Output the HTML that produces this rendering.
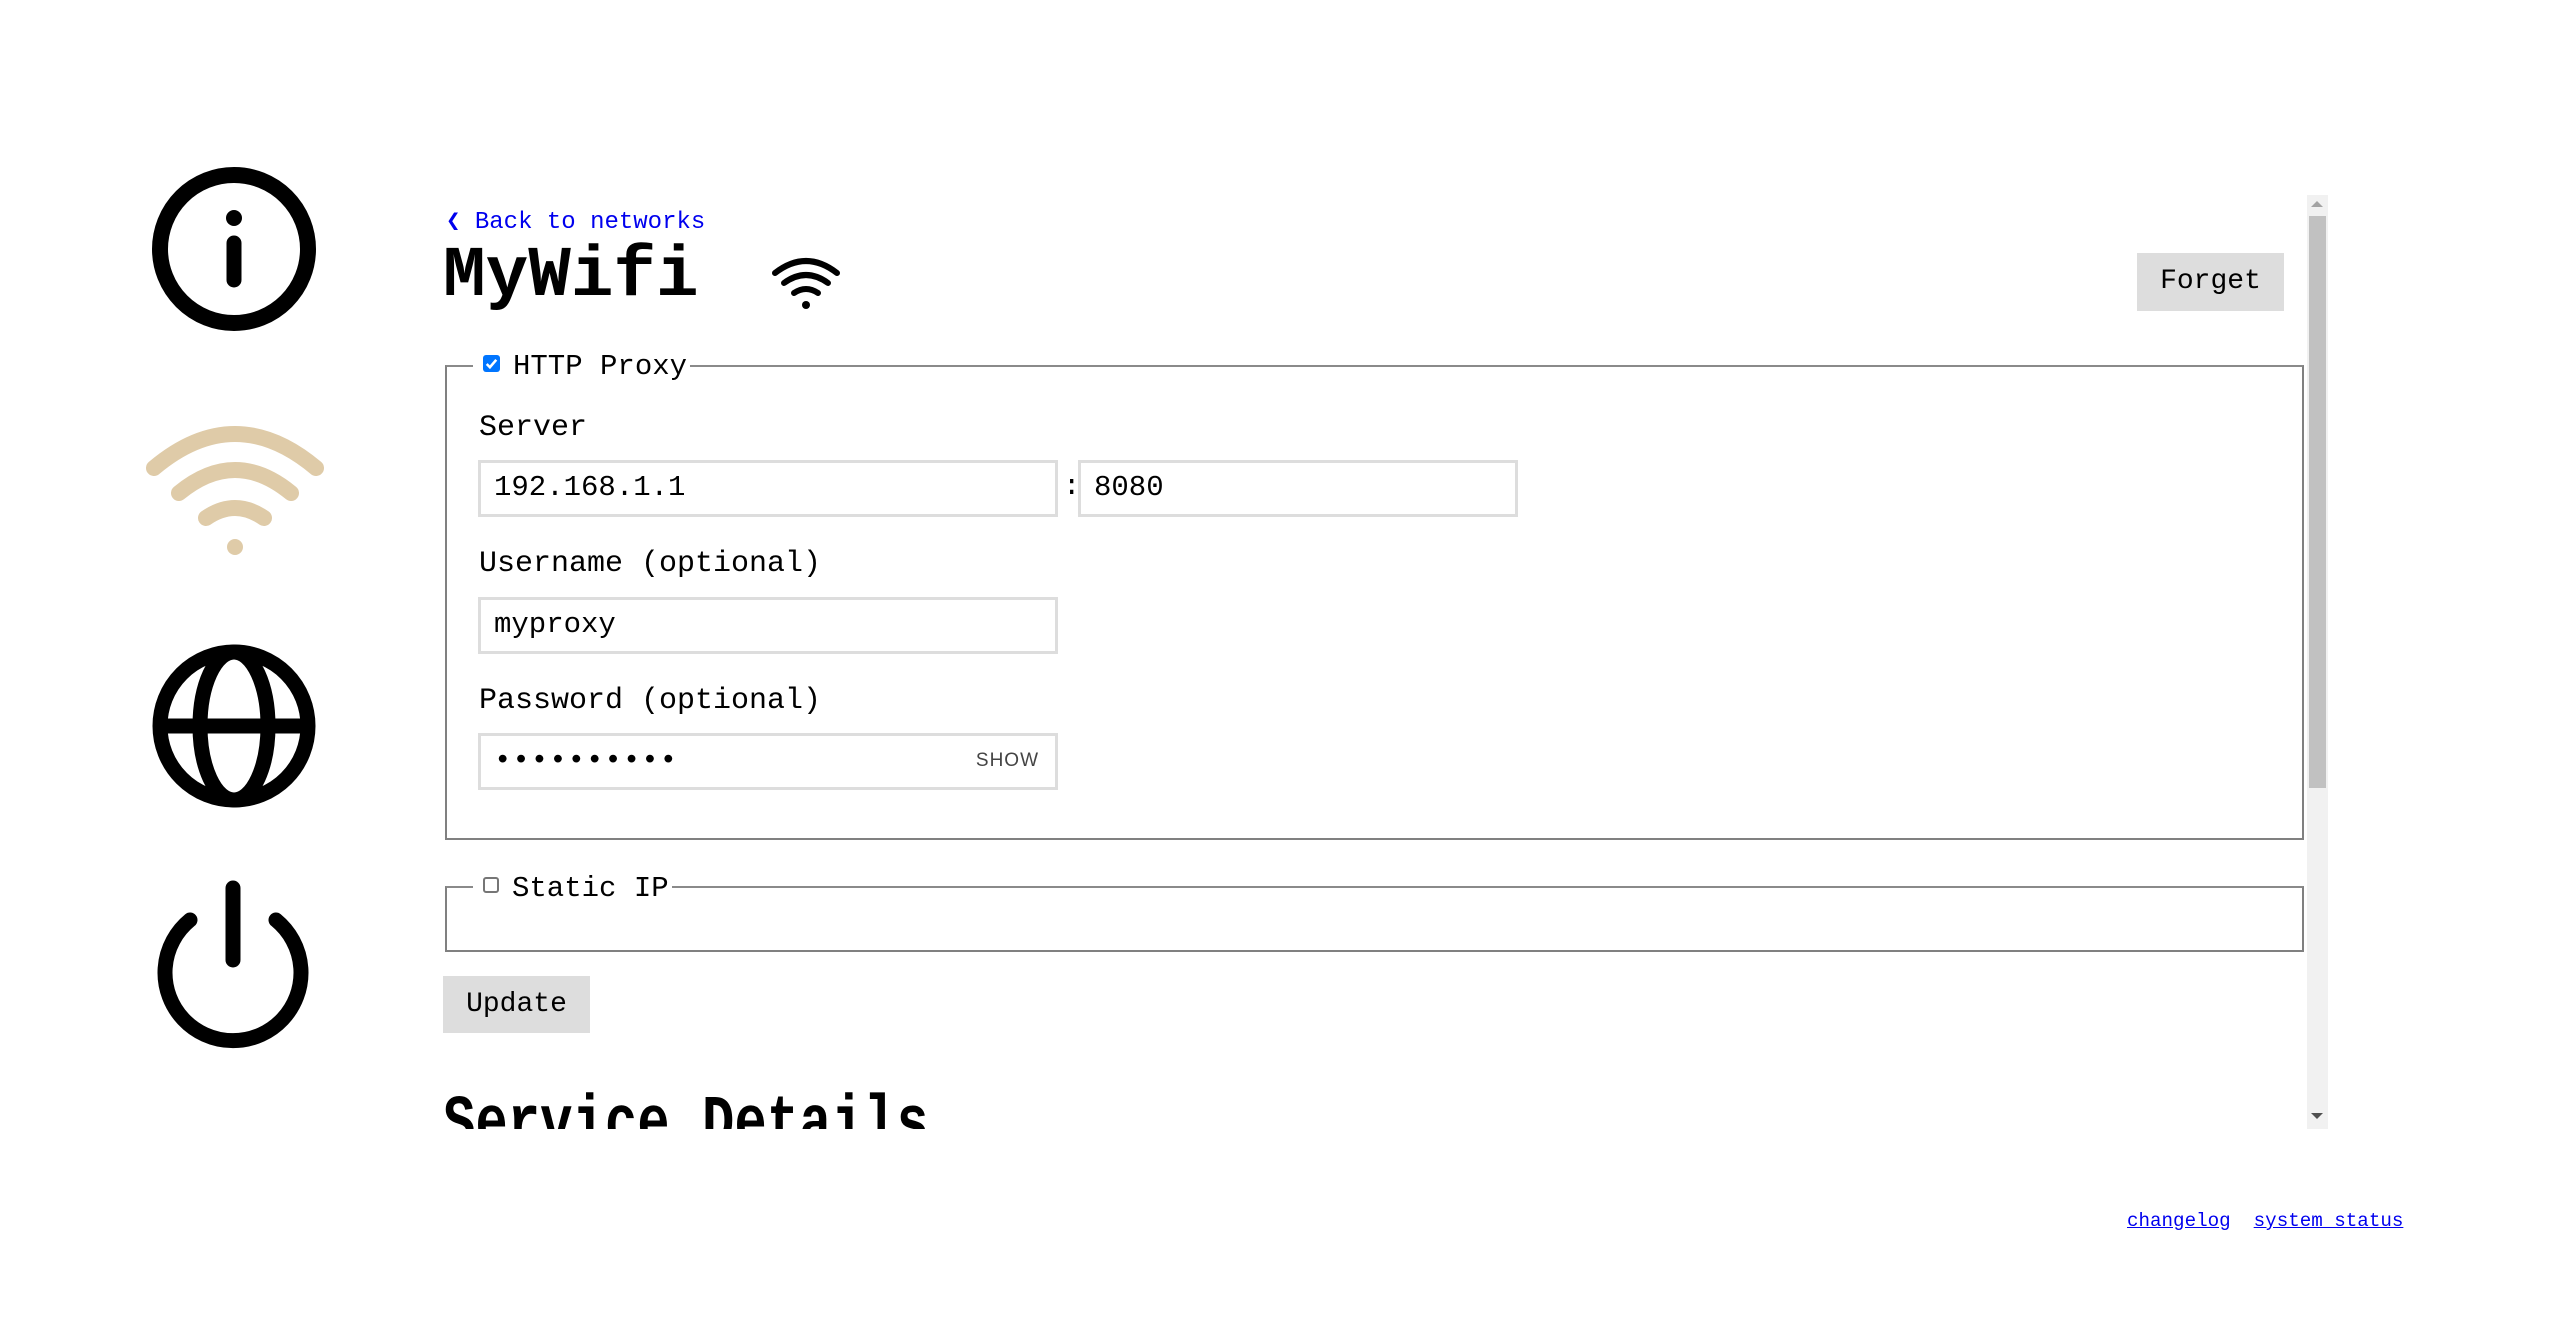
<!DOCTYPE html>
<html><head><meta charset="utf-8"><style>
*{box-sizing:border-box;margin:0;padding:0}
body{width:2560px;height:1328px;background:#fff;position:relative;overflow:hidden;font-family:"Liberation Mono","DejaVu Sans Mono",monospace;color:#000}
.a{position:absolute;white-space:nowrap}
.inp{position:absolute;border:3px solid #ddd;background:#fff;font-size:29px;line-height:50px;padding-left:13px}
.lbl{position:absolute;font-size:30px;line-height:36px}
.btn{position:absolute;background:#ddd;font-size:28px;text-align:center}
.fs{position:absolute;border:2px solid #808080;border-top-color:#8a8a8a}
.leg{position:absolute;background:#fff;font-size:29px;line-height:34px;padding:0 3px 0 10px}
.cb{display:inline-block;width:17px;height:17px;border-radius:3px;vertical-align:middle;margin-right:13px;position:relative;top:-3px}
a{color:#00e;text-decoration:underline}
</style></head><body>
<svg class="a" style="left:149px;top:164px" width="170" height="170" viewBox="0 0 170 170"><circle cx="85" cy="85" r="74" fill="none" stroke="#000" stroke-width="16"/><circle cx="85" cy="54" r="8"/><line x1="85" y1="79" x2="85" y2="116" stroke="#000" stroke-width="15" stroke-linecap="round"/></svg>
<svg class="a" style="left:140px;top:420px" width="190" height="150" viewBox="0 0 190 150"><g fill="none" stroke="#dfcba8" stroke-width="16" stroke-linecap="round"><path d="M14 48 Q95 -20 176 48"/><path d="M39 73 Q95 27 151 73"/><path d="M66 98 Q95 78 124 98"/></g><circle cx="95" cy="127" r="8" fill="#dfcba8"/></svg>
<svg class="a" style="left:149px;top:641px" width="170" height="170" viewBox="0 0 170 170"><g fill="none" stroke="#000" stroke-width="15"><circle cx="85" cy="85" r="74"/><ellipse cx="85" cy="85" rx="34" ry="74"/><line x1="11" y1="85" x2="159" y2="85"/></g></svg>
<svg class="a" style="left:150px;top:878px" width="170" height="180" viewBox="0 0 170 180"><g fill="none" stroke="#000" stroke-width="15" stroke-linecap="round"><line x1="83" y1="10" x2="83" y2="82"/><path d="M40 42 A68 68 0 1 0 126 42"/></g></svg>

<div class="a" style="left:446px;top:208px;font-size:24px;line-height:30px;color:#00e"><span style="font-weight:bold">❮</span> Back to networks</div>
<div class="a" style="left:443px;top:235px;font-size:71px;line-height:84px;font-weight:bold">MyWifi</div>
<svg class="a" style="left:770px;top:255px" width="72" height="56" viewBox="0 0 72 56"><g fill="none" stroke="#000" stroke-width="6" stroke-linecap="round"><path d="M5 18 Q36 -6 67 18"/><path d="M14 28 Q36 12 58 28"/><path d="M24 38 Q36 30 48 38"/></g><circle cx="36" cy="50" r="4"/></svg>
<div class="btn" style="left:2137px;top:253px;width:147px;height:58px;line-height:58px">Forget</div>

<div class="fs" style="left:445px;top:365px;width:1859px;height:475px"></div>
<div class="leg" style="left:473px;top:350px"><span class="cb" style="background:#0075ff"><svg width="17" height="17" viewBox="0 0 16 16" style="position:absolute;left:0;top:0"><path d="M3.5 8.5 L6.5 11.5 L12.5 4.5" fill="none" stroke="#fff" stroke-width="2.4"/></svg></span>HTTP Proxy</div>
<div class="lbl" style="left:479px;top:410px">Server</div>
<div class="inp" style="left:478px;top:460px;width:580px;height:57px">192.168.1.1</div>
<div class="a" style="left:1063px;top:470px;font-size:29px">:</div>
<div class="inp" style="left:1078px;top:460px;width:440px;height:57px">8080</div>
<div class="lbl" style="left:479px;top:546px">Username (optional)</div>
<div class="inp" style="left:478px;top:597px;width:580px;height:57px">myproxy</div>
<div class="lbl" style="left:479px;top:683px">Password (optional)</div>
<div class="inp" style="left:478px;top:733px;width:580px;height:57px;letter-spacing:1px">••••••••••<span style="position:absolute;right:16px;top:0;font-size:19px;color:#444;font-family:'Liberation Sans',sans-serif">SHOW</span></div>

<div class="fs" style="left:445px;top:886px;width:1859px;height:66px"></div>
<div class="leg" style="left:473px;top:872px"><span class="cb" style="border:2px solid #767676;background:#fff;width:16px;height:16px"></span>Static IP</div>

<div class="btn" style="left:443px;top:976px;width:147px;height:57px;line-height:57px">Update</div>
<div class="a" style="left:443px;top:1084px;height:45px;overflow:hidden;font-size:71px;line-height:84px;font-weight:bold;transform:scaleX(0.76);transform-origin:0 0">Service Details</div>

<div class="a" style="left:2307px;top:195px;width:21px;height:934px;background:#f1f1f1"></div>
<div class="a" style="left:2309px;top:216px;width:17px;height:572px;background:#c1c1c1"></div>
<div class="a" style="left:2311px;top:201px;width:0;height:0;border-left:6px solid transparent;border-right:6px solid transparent;border-bottom:6px solid #a3a3a3"></div>
<div class="a" style="left:2311px;top:1113px;width:0;height:0;border-left:6px solid transparent;border-right:6px solid transparent;border-top:6px solid #505050"></div>

<div class="a" style="left:2127px;top:1210px;font-size:19.2px"><a>changelog</a>&nbsp; <a>system status</a></div>
</body></html>
